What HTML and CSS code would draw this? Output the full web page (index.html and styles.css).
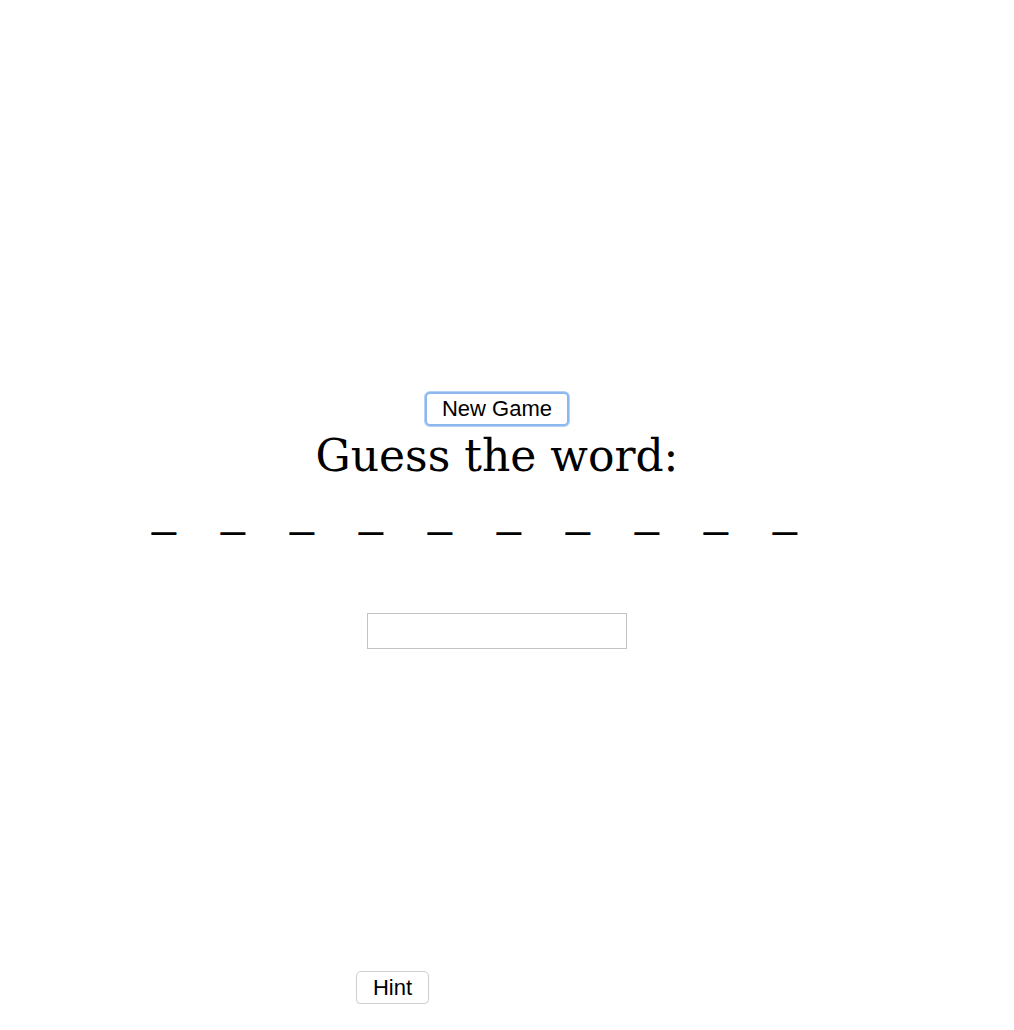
FILE: index.html
```html
<!DOCTYPE html>
<html lang="en">
<head>
<meta charset="utf-8">
<title>Guess the word</title>
<link rel="stylesheet" href="styles.css">
</head>
<body>
<main class="game">
  <button class="btn new-game" type="button">New Game</button>
  <h1 class="title">Guess the word:</h1>
  <div class="blanks">
    <span class="blank">_</span><span class="blank">_</span><span class="blank">_</span><span class="blank">_</span><span class="blank">_</span><span class="blank">_</span><span class="blank">_</span><span class="blank">_</span><span class="blank">_</span><span class="blank">_</span>
  </div>
  <input class="guess" type="text" aria-label="Guess">
</main>
<div class="hint-row">
  <button class="btn hint" type="button">Hint</button>
</div>
</body>
</html>
```
FILE: styles.css
```css
html, body {
  margin: 0;
  padding: 0;
  background: #ffffff;
}

body {
  font-family: "Liberation Sans", Arial, sans-serif;
  color: #000;
}

.game {
  width: 994px;
  padding-top: 392px;
  display: flex;
  flex-direction: column;
  align-items: center;
}

.btn {
  font-family: "Liberation Sans", Arial, sans-serif;
  font-size: 22px;
  line-height: 24px;
  color: #000;
  background: #fff;
  border: 1px solid #c8c8c8;
  border-radius: 5px;
  padding: 3px 10px;
  margin: 0;
  box-sizing: border-box;
}

.new-game {
  width: 144px;
  height: 34px;
  border: 2px solid #8cb8ee;
  box-shadow: 0 0 0 1px #b5d2f5;
}

.title {
  margin: 1px 0 0;
  font-family: "DejaVu Serif", Georgia, serif;
  font-weight: normal;
  font-size: 44px;
  line-height: 58px;
}

.blanks {
  display: flex;
  margin-top: 7px;
  height: 40px;
}

.blank {
  display: block;
  width: 69px;
  font-family: "Liberation Sans", Arial, sans-serif;
  font-size: 43px;
  line-height: 40px;
}

.guess {
  margin-top: 81px;
  width: 260px;
  height: 36px;
  box-sizing: border-box;
  border: 1px solid #c3c3c3;
  padding: 2px 6px;
  font-size: 18px;
  outline: none;
}

.hint-row {
  padding-top: 322px;
  padding-left: 356px;
}

.hint {
  width: 73px;
  height: 33px;
  border: 1px solid #cfcfcf;
  box-shadow: 0 1px 1px rgba(0, 0, 0, 0.08);
}
```
